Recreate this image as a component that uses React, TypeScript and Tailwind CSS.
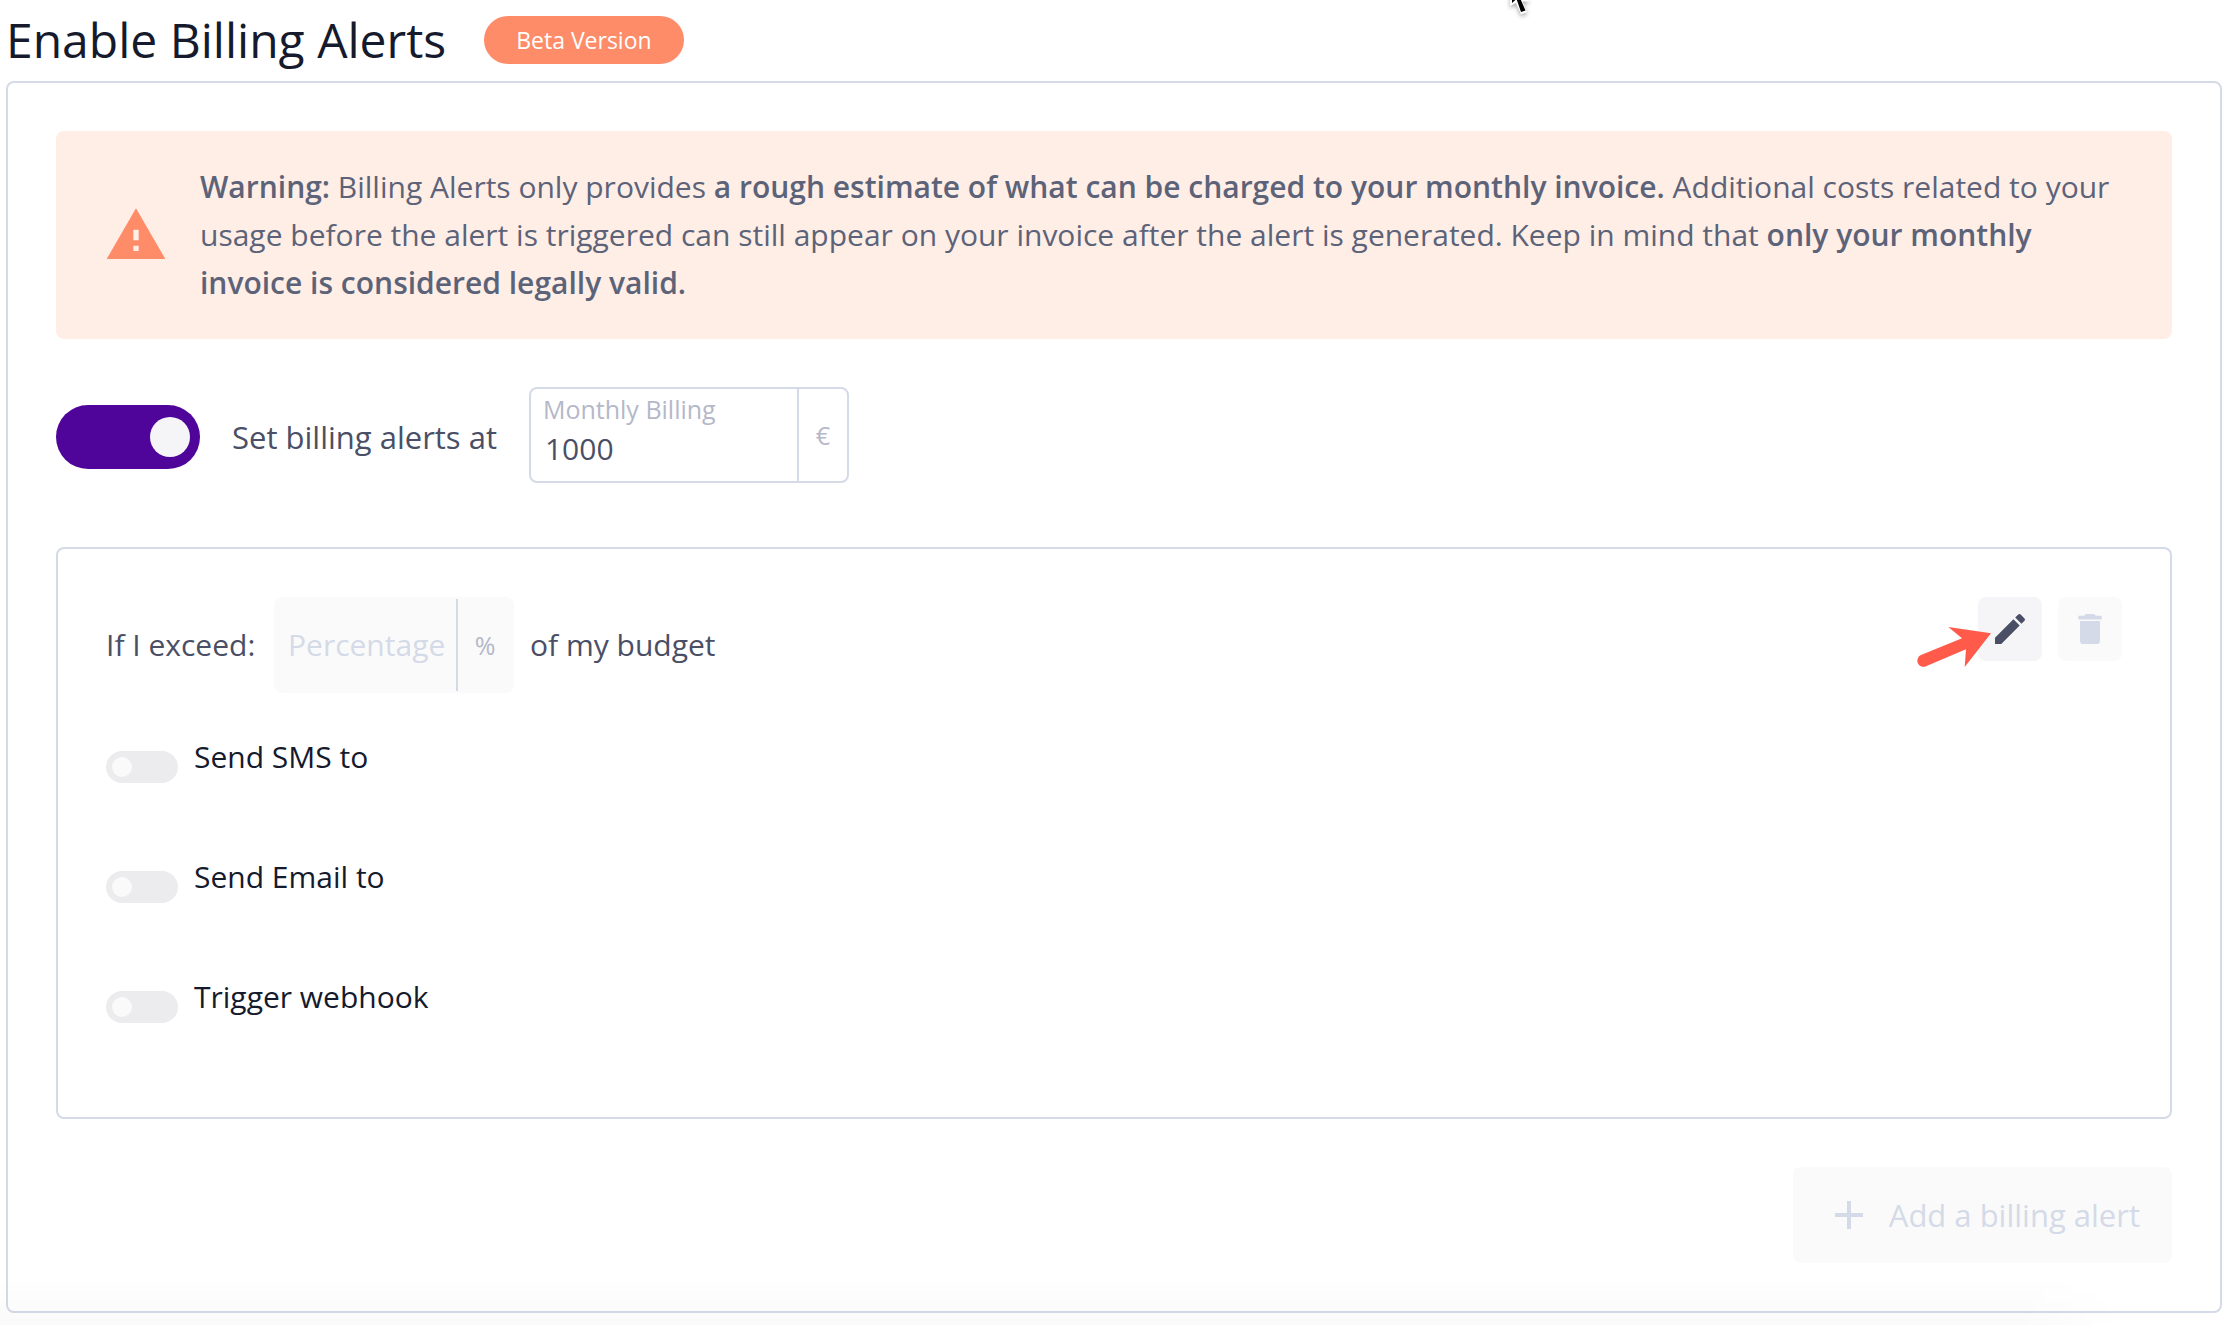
import { useState } from "react";

const notifications = ["Send SMS to", "Send Email to", "Trigger webhook"];

function WarningIcon() {
  return (
    <svg className="size-16 shrink-0 fill-[#ff8c69]" viewBox="0 0 24 24" aria-hidden="true">
      <path d="M1 21h22L12 2 1 21zm12-3h-2v-2h2v2zm0-4h-2v-4h2v4z" />
    </svg>
  );
}

function PencilIcon() {
  return (
    <svg className="size-10 fill-[#4a4f66]" viewBox="0 0 24 24" aria-hidden="true">
      <path d="M3 17.25V21h3.75L17.81 9.94l-3.75-3.75L3 17.25zM20.71 7.04a1 1 0 0 0 0-1.41l-2.34-2.34a1 1 0 0 0-1.41 0l-1.83 1.83 3.75 3.75 1.83-1.83z" />
    </svg>
  );
}

function TrashIcon() {
  return (
    <svg className="size-10 fill-[#d4dae7]" viewBox="0 0 24 24" aria-hidden="true">
      <path d="M6 19a2 2 0 0 0 2 2h8a2 2 0 0 0 2-2V7.200H6V19zM19 4h-3.500l-1-1h-5l-1 1H5v2.300h14V4z" />
    </svg>
  );
}

function PlusIcon() {
  return (
    <svg className="size-12 fill-[#d4dae7]" viewBox="0 0 24 24" aria-hidden="true">
      <path d="M19 13h-6v6h-2v-6H5v-2h6V5h2v6h6v2z" />
    </svg>
  );
}

function PointerArrow() {
  return (
    <svg
      className="pointer-events-none absolute top-6 -left-16 h-12 w-20 fill-[#ff5a4a]"
      viewBox="0 0 80 48"
      aria-hidden="true"
    >
      <path d="M77 12.300 L34.300 6 L48 17.300 L7 34 A6 6 0 0 0 12 45.300 L52 28.300 L50.700 46 Z" />
    </svg>
  );
}

function MouseCursor() {
  return (
    <svg
      className="pointer-events-none absolute top-0 left-[1508px] h-5 w-8 overflow-visible drop-shadow-[0_2px_2px_rgba(0,0,0,0.35)]"
      viewBox="0 0 32 20"
      aria-hidden="true"
    >
      <path d="M2 -4V6L8 3L13 14.500L19 12L14.500 1.500H22L16 -4Z" fill="#fff" />
      <path d="M4 -2V3L8.500 -1L13 12L17.500 10.500L12 -2Z" fill="#000" />
    </svg>
  );
}

export default function App() {
  const [enabled, setEnabled] = useState(true);
  const [amount, setAmount] = useState("1000");

  return (
    <div className="relative overflow-hidden bg-white pt-4 pr-3.5 pb-3 pl-1.5 font-['Open_Sans',sans-serif] text-[30px] leading-12 text-[#4a4f66]">
      <MouseCursor />
      <header className="flex h-[65px] items-start gap-[38px]">
        <h1 className="text-[48px] leading-12 text-[#151a2d]">Enable Billing Alerts</h1>
        <span className="rounded-full bg-[#ff8c69] px-8 text-[23px] leading-12 text-white">
          Beta Version
        </span>
      </header>

      <main className="rounded-lg border-2 border-[#d4dae7] p-12">
        <div
          role="alert"
          className="flex items-center gap-8 rounded-lg bg-[#ffeee6] px-12 py-8 text-[#5c6379]"
        >
          <WarningIcon />
          <p>
            <strong className="font-semibold">Warning:</strong> Billing Alerts only provides{" "}
            <strong className="font-semibold">
              a rough estimate of what can be charged to your monthly invoice.
            </strong>{" "}
            Additional costs related to your usage before the alert is triggered can still appear on
            your invoice after the alert is generated. Keep in mind that{" "}
            <strong className="font-semibold">
              only your monthly invoice is considered legally valid.
            </strong>
          </p>
        </div>

        <div className="mt-12 flex items-center gap-8">
          <label className="mt-1 flex items-center gap-8 text-[31px]">
            <span className="flex h-16 w-36">
              <input
                type="checkbox"
                role="switch"
                checked={enabled}
                onChange={(e) => setEnabled(e.target.checked)}
                className="peer sr-only"
              />
              <span className="flex w-full items-center rounded-full bg-[#d4dae7] px-2.5 peer-checked:justify-end peer-checked:bg-[#4f0599]">
                <span className="size-10 rounded-full bg-[#f5f5f8]" />
              </span>
            </span>
            Set billing alerts at
          </label>
          <div className="flex h-24 w-80 rounded-lg border-2 border-[#d4dae7]">
            <div className="flex min-w-0 flex-1 flex-col px-3">
              <label htmlFor="amount" className="text-[25px] leading-10 text-[#b4b8c8]">
                Monthly Billing
              </label>
              <input
                id="amount"
                value={amount}
                onChange={(e) => setAmount(e.target.value)}
                className="h-10 w-full px-0.5 outline-none"
              />
            </div>
            <span className="flex w-[50px] items-center justify-center border-l-2 border-[#d4dae7] text-[25px] text-[#b4b8c8]">
              €
            </span>
          </div>
        </div>

        <section className="mt-16 rounded-lg border-2 border-[#d4dae7] px-12 pt-12 pb-[94px]">
          <div className="flex items-start justify-between">
            <div className="flex items-center gap-4">
              <label htmlFor="percentage" className="w-38">
                If I exceed:
              </label>
              <div className="flex h-24 w-60 rounded-lg border-2 border-[#fafafa] bg-[#fafafa]">
                <input
                  id="percentage"
                  disabled
                  placeholder="Percentage"
                  className="min-w-0 flex-1 pl-3 placeholder:text-[#d4dae7]"
                />
                <span className="flex w-14 items-center justify-center border-l-2 border-[#d4dae7] text-[25px] text-[#b4b8c8]">
                  %
                </span>
              </div>
              <span>of my budget</span>
            </div>
            <div className="relative flex gap-4">
              <button
                type="button"
                aria-label="Edit alert"
                className="flex size-16 items-center justify-center rounded-lg bg-[#f5f5f8]"
              >
                <PencilIcon />
              </button>
              <button
                type="button"
                disabled
                aria-label="Delete alert"
                className="flex size-16 items-center justify-center rounded-lg bg-[#fafafa]"
              >
                <TrashIcon />
              </button>
              <PointerArrow />
            </div>
          </div>

          <div className="mt-10 flex flex-col gap-[70px] text-[#151a2d]">
            {notifications.map((name) => (
              <label key={name} className="flex h-[50px] items-end gap-4 self-start">
                <input type="checkbox" role="switch" disabled className="peer sr-only" />
                <span className="flex h-8 w-18 items-center rounded-full bg-[#ececee] px-1.5">
                  <span className="size-5 rounded-full bg-[#fafafa]" />
                </span>
                <span className="self-start">{name}</span>
              </label>
            ))}
          </div>
        </section>

        <div className="mt-12 flex justify-end">
          <button
            type="button"
            disabled
            className="flex h-24 items-center gap-4 rounded-lg bg-[#fafafa] px-8 text-[31px] font-medium text-[#d4dae7]"
          >
            <PlusIcon />
            Add a billing alert
          </button>
        </div>
      </main>
      <div className="pointer-events-none absolute right-28 bottom-0 left-0 h-12 bg-linear-to-b from-transparent to-black/2 mask-r-from-95%" />
    </div>
  );
}
